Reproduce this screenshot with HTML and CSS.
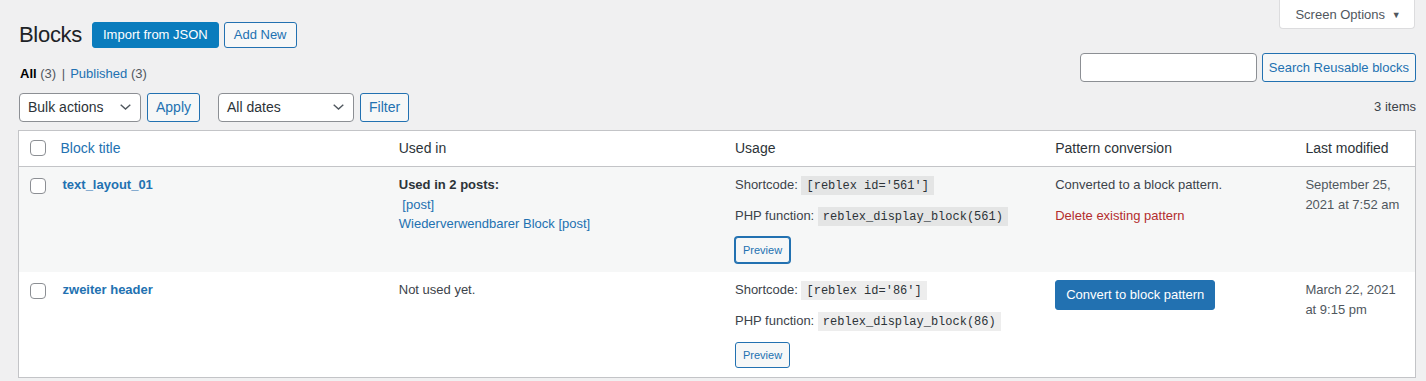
FILE: index.html
```html
<!DOCTYPE html>
<html lang="en">

<head>
    <meta charset="UTF-8">
    <title>Blocks</title>
    <link rel="stylesheet" href="styles.css">
</head>

<body>
    <div class="wrap">
        <div class="screen-options">Screen Options <span class="arrow">&#9660;</span></div>

        <div class="title-row">
            <h1>Blocks</h1>
            <a class="button button-primary">Import from JSON</a>
            <a class="button">Add New</a>
        </div>

        <div class="filter-row">
            <ul class="subsubsub">
                <li><span class="current">All</span> <span class="count">(3)</span> <span class="sep">|</span></li>
                <li><a href="#">Published</a> <span class="count">(3)</span></li>
            </ul>
            <div class="search-box">
                <input type="search" class="search-input">
                <a class="button">Search Reusable blocks</a>
            </div>
        </div>

        <div class="tablenav">
            <div class="actions">
                <div class="select bulk">
                    <span>Bulk actions</span>
                    <svg width="11" height="6" viewBox="0 0 11 6"><path d="M0.7 0.7 L5.5 5 L10.3 0.7" fill="none" stroke="#50575e" stroke-width="1.4"/></svg>
                </div>
                <a class="button">Apply</a>
            </div>
            <div class="actions">
                <div class="select dates">
                    <span>All dates</span>
                    <svg width="11" height="6" viewBox="0 0 11 6"><path d="M0.7 0.7 L5.5 5 L10.3 0.7" fill="none" stroke="#50575e" stroke-width="1.4"/></svg>
                </div>
                <a class="button">Filter</a>
            </div>
            <div class="displaying-num">3 items</div>
        </div>

        <table class="list-table">
            <colgroup>
                <col class="col-check">
                <col class="col-title">
                <col class="col-used">
                <col class="col-usage">
                <col class="col-pattern">
                <col class="col-date">
            </colgroup>
            <thead>
                <tr>
                    <th class="check-column"><input type="checkbox"></th>
                    <th><a href="#">Block title</a></th>
                    <th>Used in</th>
                    <th>Usage</th>
                    <th>Pattern conversion</th>
                    <th>Last modified</th>
                </tr>
            </thead>
            <tbody>
                <tr class="alternate">
                    <td class="check-column"><input type="checkbox"></td>
                    <td><a class="row-title" href="#">text_layout_01</a></td>
                    <td>
                        <strong>Used in 2 posts:</strong><br>
                        <a href="#">&nbsp;[post]</a><br>
                        <a href="#">Wiederverwendbarer Block [post]</a>
                    </td>
                    <td>
                        <p>Shortcode: <code>[reblex id='561']</code></p>
                        <p>PHP function: <code>reblex_display_block(561)</code></p>
                        <a class="button button-small focused">Preview</a>
                    </td>
                    <td>
                        <p>Converted to a block pattern.</p>
                        <p><a class="delete" href="#">Delete existing pattern</a></p>
                    </td>
                    <td class="date">September 25, 2021 at 7:52 am</td>
                </tr>
                <tr>
                    <td class="check-column"><input type="checkbox"></td>
                    <td><a class="row-title" href="#">zweiter header</a></td>
                    <td>Not used yet.</td>
                    <td>
                        <p>Shortcode: <code>[reblex id='86']</code></p>
                        <p>PHP function: <code>reblex_display_block(86)</code></p>
                        <a class="button button-small">Preview</a>
                    </td>
                    <td>
                        <a class="button button-convert">Convert to block pattern</a>
                    </td>
                    <td class="date">March 22, 2021 at 9:15 pm</td>
                </tr>
            </tbody>
        </table>
    </div>
</body>

</html>
```

FILE: styles.css
```css
body {
    margin: 0;
    background: #f0f0f1;
    color: #3c434a;
    font-family: "Liberation Sans", Arial, sans-serif;
    font-size: 13px;
    line-height: 1.5;
}

a {
    color: #2271b1;
    text-decoration: none;
}

.wrap {
    display: flow-root;
    padding: 0 10px 0 18px;
}

/* tab in the top right corner */
.screen-options {
    float: right;
    width: 136px;
    height: 29px;
    margin-right: 1px;
    box-sizing: border-box;
    background: #fff;
    border: 1px solid #dcdcde;
    border-top: none;
    border-radius: 0 0 4px 4px;
    color: #50575e;
    text-align: center;
    line-height: 29px;
    padding-left: 2px;
}

.screen-options .arrow {
    font-size: 9px;
    margin-left: 3px;
    vertical-align: 1px;
}

.title-row {
    display: flex;
    align-items: center;
    gap: 5px;
    margin-top: 20px;
    height: 30px;
}

h1 {
    margin: 0 5px 0 1px;
    font-size: 22px;
    font-weight: 400;
    line-height: 1.3;
    color: #1d2327;
    letter-spacing: -0.3px;
}

.button {
    display: inline-block;
    box-sizing: border-box;
    height: 26px;
    line-height: 24px;
    padding: 0 9px;
    border: 1px solid #2271b1;
    border-radius: 3px;
    background: #f6f7f7;
    color: #2271b1;
    font-size: 13px;
    white-space: nowrap;
    cursor: pointer;
}

.button-primary {
    background: #0a7cbd;
    border-color: #0a7cbd;
    color: #fff;
    padding: 0 10px;
}

.filter-row {
    display: flex;
    justify-content: space-between;
    align-items: flex-start;
}

.subsubsub {
    list-style: none;
    margin: 14px 0 0 2px;
    padding: 0;
    display: flex;
    gap: 3px;
}

.subsubsub .current {
    color: #000;
    font-weight: 600;
}

.subsubsub .count,
.subsubsub .sep {
    color: #50575e;
}

.subsubsub .sep {
    margin: 0 2px;
}

.search-box {
    display: flex;
    gap: 5px;
    margin-top: 3px;
}

.search-input {
    width: 177px;
    height: 29px;
    box-sizing: border-box;
    margin: 0;
    border: 1px solid #8c8f94;
    border-radius: 4px;
    background: #fff;
}

.search-box .button {
    height: 29px;
    line-height: 27px;
    padding: 0 6px;
}

.tablenav {
    display: flex;
    align-items: center;
    margin: 9px 0 8px 1px;
    height: 29px;
}

.actions {
    display: flex;
    gap: 6px;
    margin-right: 18px;
}

.select {
    display: flex;
    justify-content: space-between;
    align-items: center;
    box-sizing: border-box;
    height: 29px;
    padding: 0 9px 0 8px;
    background: #fff;
    border: 1px solid #8c8f94;
    border-radius: 4px;
    color: #2c3338;
    font-size: 14px;
}

.select.bulk {
    width: 122px;
}

.select.dates {
    width: 136px;
}

.actions .button {
    height: 29px;
    line-height: 27px;
    font-size: 14px;
    padding: 0 8px;
}

.displaying-num {
    margin-left: auto;
    color: #3c434a;
}

.list-table {
    width: 100%;
    table-layout: fixed;
    border-collapse: collapse;
    border: 1px solid #c3c4c7;
    background: #fff;
}

.col-check { width: 32px; }
.col-title { width: 338px; }
.col-used { width: 336px; }
.col-usage { width: 320px; }
.col-pattern { width: 250px; }
.col-date { width: 120px; }

th {
    text-align: left;
    font-weight: 400;
    font-size: 14px;
    line-height: 1.4;
    color: #2c3338;
    padding: 8px 10px;
    border-bottom: 1px solid #c3c4c7;
}

td {
    vertical-align: top;
    padding: 8px 10px 9px;
    line-height: 1.5;
}

.alternate {
    background: #f6f7f7;
}

.check-column {
    padding: 0 0 0 11px;
    vertical-align: middle;
}

td.check-column {
    vertical-align: top;
    padding-top: 11px;
}

input[type="checkbox"] {
    appearance: none;
    display: block;
    width: 16px;
    height: 16px;
    margin: 0;
    border: 1px solid #8c8f94;
    border-radius: 4px;
    background: #fff;
}

.row-title {
    font-weight: 700;
    font-size: 13px;
    padding-left: 2px;
}

td strong {
    font-weight: 600;
    color: #2c3338;
}

td p {
    margin: 0 0 11px;
}

code {
    font-family: "Liberation Mono", "DejaVu Sans Mono", monospace;
    font-size: 12px;
    background: rgba(0, 0, 0, 0.07);
    padding: 3px 5px 2px;
    color: #2c3338;
}

.button-small {
    height: 26px;
    line-height: 24px;
    padding: 0 7px;
    font-size: 11px;
}

.focused {
    box-shadow: 0 0 0 1px #2271b1;
}

.delete {
    color: #b32d2e;
}

.button-convert {
    height: 30px;
    line-height: 28px;
    background: #2271b1;
    color: #fff;
    padding: 0 10px;
}

.date {
    color: #50575e;
}
```
